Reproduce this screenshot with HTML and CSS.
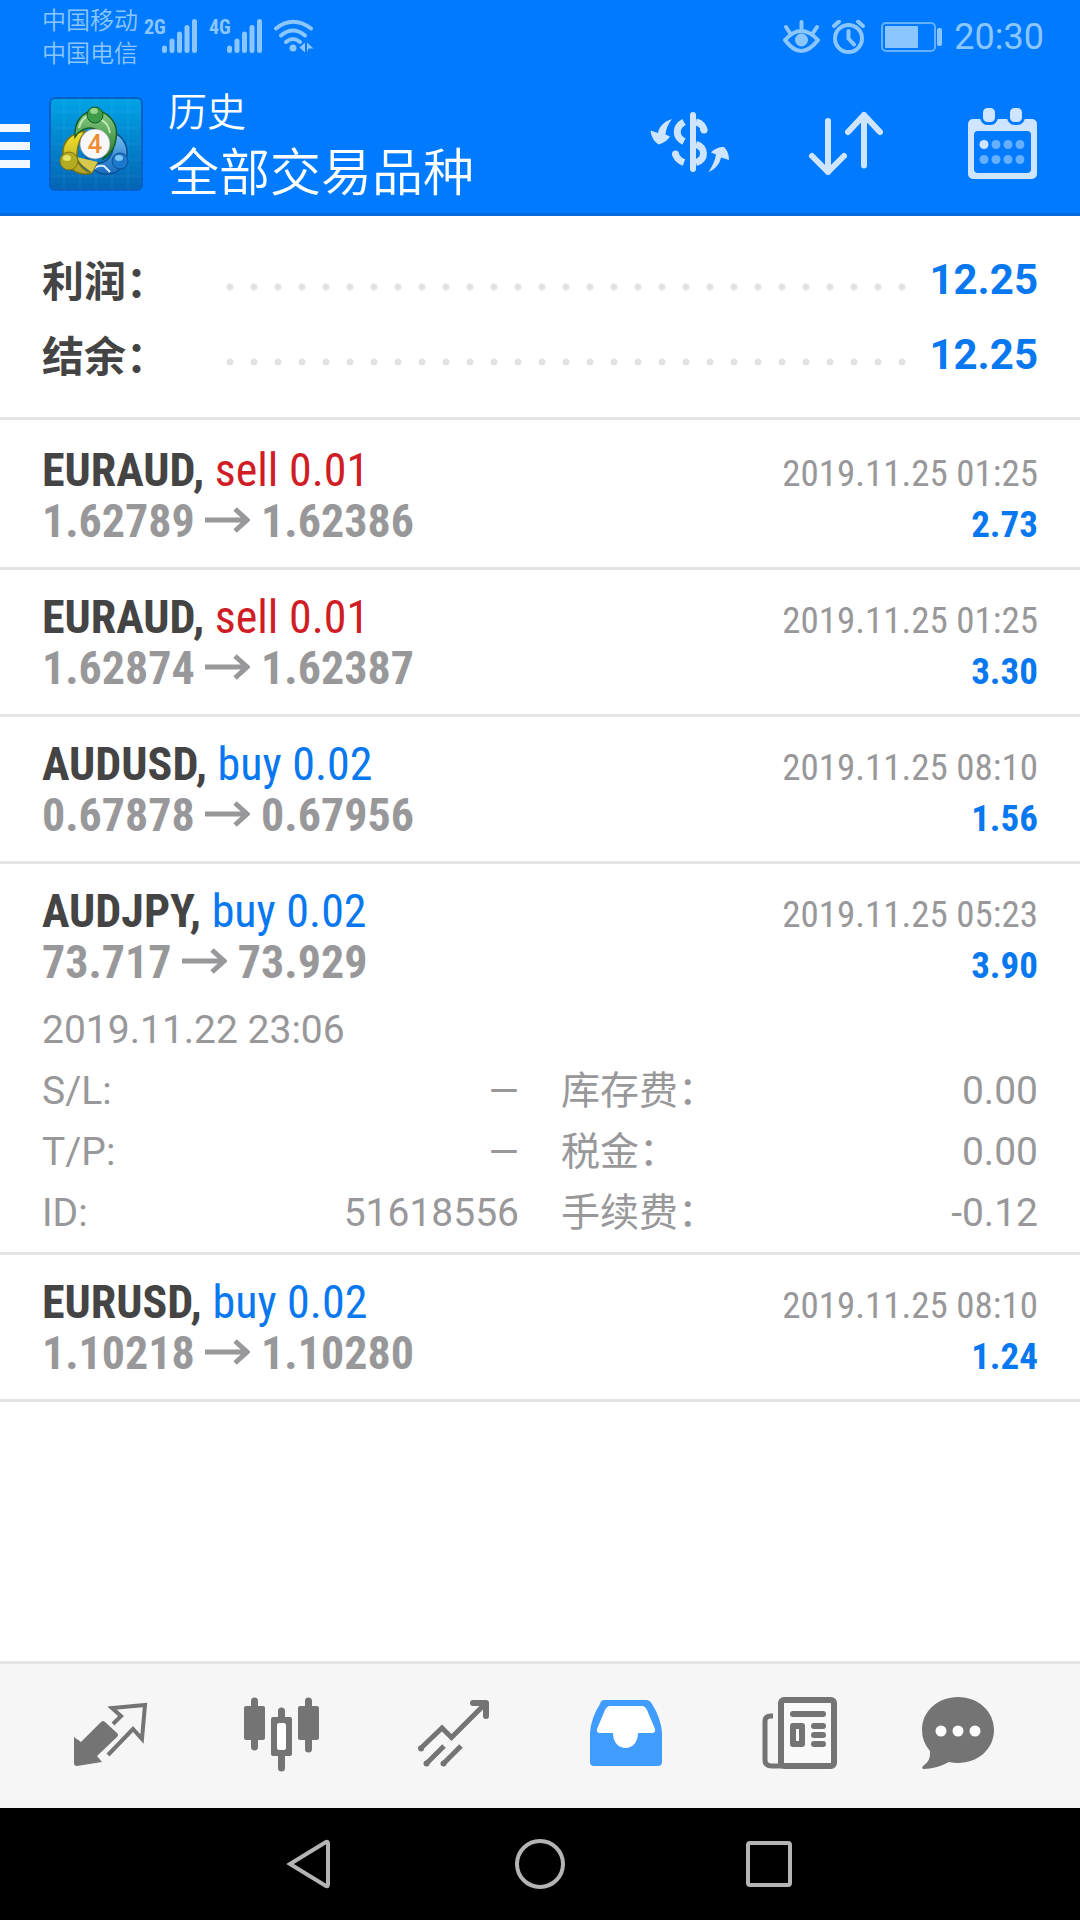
FILE: index.html
```html
<!DOCTYPE html>
<html lang="zh-CN">
<head>
<meta charset="utf-8">
<meta name="viewport" content="width=device-width, initial-scale=1">
<title>历史</title>
<link rel="stylesheet" href="styles.css">
</head>
<body>
<header class="header">
  <div class="status">
    <div class="carriers"><span>中国移动</span><span>中国电信</span></div>
    <div class="signal">
      <span class="net">2G</span>
      <svg width="35" height="34" viewBox="0 0 35 34"><path d="M2.5 29v2.5M10 22v9.500M17.500 15v16.500M25 8.500v23M32.500 2.500v29"/></svg>
    </div>
    <div class="signal">
      <span class="net">4G</span>
      <svg width="35" height="34" viewBox="0 0 35 34"><path d="M2.5 29v2.5M10 22v9.500M17.500 15v16.500M25 8.500v23M32.500 2.500v29"/></svg>
    </div>
    <svg class="wifi" width="40" height="34" viewBox="0 0 40 34">
      <path class="line" d="M2 9.500Q19 -4 37 9.500M7 16.500Q19 6.500 31 16.500M12 23Q19 17 26 23"/>
      <circle cx="19" cy="29" r="3.500"/>
      <path d="M25.500 28.500l5.500-5v10zM33 23.500v10l1.500-4h5z"/>
    </svg>
    <div class="status-right">
      <svg class="line" width="37" height="34" viewBox="0 0 37 34">
        <path d="M2 20Q18 2 35 20Q18 42 2 20ZM18.500 2v6M3 7l4 6M34 7l-4 6"/>
        <circle class="solid" cx="18.500" cy="20" r="4.500"/>
      </svg>
      <svg class="line" width="33" height="34" viewBox="0 0 33 34">
        <circle cx="16.500" cy="18.500" r="13.500"/>
        <path d="M16.500 11v7.500l5.500 6M2 6l5-4.500M31 6l-5-4.500"/>
      </svg>
      <svg class="battery" width="61" height="30" viewBox="0 0 61 30">
        <rect class="shell" x="1" y="1" width="53" height="28" rx="4"/>
        <rect x="4" y="4" width="33" height="22" rx="1"/>
        <rect x="56" y="6" width="5" height="18" rx="2"/>
      </svg>
      <time class="clock">20:30</time>
    </div>
  </div>
  <div class="toolbar">
    <button class="menu" aria-label="菜单">
      <svg width="30" height="50" viewBox="0 0 30 50"><path d="M0 5h30v8H0zM0 23h30v8H0zM0 41h30v8H0z"/></svg>
      <svg width="94" height="94" viewBox="0 0 94 94">
        <defs>
          <linearGradient id="tile" x1="0" y1="0" x2="0" y2="1"><stop offset="0" stop-color="#00a3e6"/><stop offset="1" stop-color="#0464b4"/></linearGradient>
          <linearGradient id="green" x1="0" y1="0" x2="0" y2="1"><stop offset="0" stop-color="#8ccc84"/><stop offset="1" stop-color="#22782c"/></linearGradient>
          <linearGradient id="gold" x1="0" y1="0" x2="0" y2="1"><stop offset="0" stop-color="#f6e428"/><stop offset="1" stop-color="#b0a028"/></linearGradient>
          <linearGradient id="sky" x1="0" y1="0" x2="0" y2="1"><stop offset="0" stop-color="#78c4f4"/><stop offset="1" stop-color="#1468c0"/></linearGradient>
        </defs>
        <rect x="1" y="1" width="92" height="92" rx="5" fill="url(#tile)" stroke="#0860c4" stroke-width="2"/>
        <path d="M15 2v90M31 2v90M47 2v90M63 2v90M79 2v90M2 15h90M2 31h90M2 47h90M2 63h90M2 79h90" stroke="#fff" stroke-opacity=".07"/>
        <path d="M64 36C73 38 79 48 78 58C77 70 66 79 55 77C46 76 39 68 37 61C48 70 61 67 64 52Z" fill="url(#sky)" stroke="#0c4f92" stroke-width="1.500"/>
        <path d="M41 76C45 71 48 68 55 69L61 75" fill="none" stroke="#d4eefc" stroke-width="2"/>
        <path d="M36 34C22 36 13 45 14 57C15 70 29 80 43 76C34 74 27 66 28 57C28 47 32 40 36 34Z" fill="url(#gold)" stroke="#7c7410" stroke-width="1.500"/>
        <path d="M28 60C30 68 37 71 43 76L49 65" fill="#d8c84c" stroke="#7c7410"/>
        <path d="M26 40C25 24 34 14 46 14C60 14 70 27 67 42C66 51 61 58 54 62C60 49 57 36 46 32C37 29 30 34 26 40Z" fill="url(#green)" stroke="#145c24" stroke-width="1.500"/>
        <path d="M30 31C32 22 38 18 44 18M50 22C57 24 60 30 61 36" fill="none" stroke="#bce8b0" stroke-width="2"/>
        <circle cx="46" cy="18" r="8" fill="#3c9c48" stroke="#145c24"/>
        <ellipse cx="45" cy="14" rx="4" ry="3" fill="#98d48c"/>
        <circle cx="20" cy="64" r="9" fill="#b4ac20" stroke="#7c7410"/>
        <ellipse cx="18" cy="61" rx="4" ry="3" fill="#e8e468"/>
        <circle cx="71" cy="64" r="8" fill="#1c78cc" stroke="#0c4f92"/>
        <ellipse cx="70" cy="61" rx="4" ry="3" fill="#7cc4f4"/>
        <circle cx="46" cy="47" r="15" fill="#f8f8fa" stroke="#889" stroke-width=".5"/>
        <text class="logo-digit" x="46" y="56">4</text>
      </svg>
    </button>
    <div class="titles">
      <h1 class="title">历史</h1>
      <p class="subtitle">全部交易品种</p>
    </div>
    <div class="actions">
      <button aria-label="交易品种">
        <svg width="80" height="72" viewBox="0 0 80 72">
          <rect x="40" y="5" width="6" height="60" rx="3"/>
          <path class="dollar" d="M34 15C25 20 25 30 34 34.500M46 15C51 16 54 20 54 24M46 37.500C56 40 56 53 46 55.500"/>
          <path class="dollar" d="M34 55.500Q27 53 25.500 47"/>
          <circle cx="54" cy="23" r="3.500"/><circle cx="25.500" cy="47" r="3.500"/>
          <path d="M22 12C13 15 9 20 8 26L.5 23.500C1 29 4 35 9 37.500C14 36 18 33 20 29.500L15.500 27.500C16 22 18 17 22 12Z"/>
          <path d="M58.500 65C66 62 70 56 71 50.500L79 53C79 47 77 43 74 40C69 40 64 42 61 45.500L66 47.500C65 54 62 60 58.500 65Z"/>
        </svg>
      </button>
      <button aria-label="排序">
        <svg class="sort" width="80" height="72" viewBox="0 0 80 72"><path d="M22 14v51M6 49l16 16 16-16M58 58.500V8M42 25L58 8l16 17"/></svg>
      </button>
      <button aria-label="日期">
        <svg width="80" height="72" viewBox="0 0 80 72">
          <path fill-rule="evenodd" d="M11 12h59a5 5 0 0 1 5 5v50a5 5 0 0 1-5 5H11a5 5 0 0 1-5-5V17a5 5 0 0 1 5-5zM16 24a4 4 0 0 0-4 4v34a4 4 0 0 0 4 4h49a4 4 0 0 0 4-4V28a4 4 0 0 0-4-4z"/>
          <g class="peg"><rect x="19.500" y="-.5" width="15" height="17" rx="6"/><rect x="46.500" y="-.5" width="15" height="17" rx="6"/></g>
          <circle cx="22" cy="37.500" r="4.500"/>
          <g class="dim"><circle cx="34" cy="37.500" r="4.500"/><circle cx="46" cy="37.500" r="4.500"/><circle cx="58" cy="37.500" r="4.500"/><circle cx="22" cy="52.500" r="4.500"/><circle cx="34" cy="52.500" r="4.500"/><circle cx="46" cy="52.500" r="4.500"/><circle cx="58" cy="52.500" r="4.500"/></g>
        </svg>
      </button>
    </div>
  </div>
</header>

<main class="main">
  <dl class="summary">
    <div class="total"><dt>利润：</dt><dd>12.25</dd></div>
    <div class="total"><dt>结余：</dt><dd>12.25</dd></div>
  </dl>
  <ul class="deals">
    <li class="deal">
      <div class="row"><span class="symbol">EURAUD, <span class="sell">sell 0.01</span></span><time class="date">2019.11.25 01:25</time></div>
      <div class="row"><span class="prices">1.62789 <svg class="arrow" width="45" height="26" viewBox="0 0 45 26"><path d="M0 13h42M30 2l12 11-12 11"/></svg> 1.62386</span><span class="profit">2.73</span></div>
    </li>
    <li class="deal">
      <div class="row"><span class="symbol">EURAUD, <span class="sell">sell 0.01</span></span><time class="date">2019.11.25 01:25</time></div>
      <div class="row"><span class="prices">1.62874 <svg class="arrow" width="45" height="26" viewBox="0 0 45 26"><path d="M0 13h42M30 2l12 11-12 11"/></svg> 1.62387</span><span class="profit">3.30</span></div>
    </li>
    <li class="deal">
      <div class="row"><span class="symbol">AUDUSD, <span class="buy">buy 0.02</span></span><time class="date">2019.11.25 08:10</time></div>
      <div class="row"><span class="prices">0.67878 <svg class="arrow" width="45" height="26" viewBox="0 0 45 26"><path d="M0 13h42M30 2l12 11-12 11"/></svg> 0.67956</span><span class="profit">1.56</span></div>
    </li>
    <li class="deal open">
      <div class="row"><span class="symbol">AUDJPY, <span class="buy">buy 0.02</span></span><time class="date">2019.11.25 05:23</time></div>
      <div class="row"><span class="prices">73.717 <svg class="arrow" width="45" height="26" viewBox="0 0 45 26"><path d="M0 13h42M30 2l12 11-12 11"/></svg> 73.929</span><span class="profit">3.90</span></div>
      <div class="details">
        <time class="opened">2019.11.22 23:06</time>
        <dl class="facts">
          <div class="fact"><dt>S/L:</dt><dd>—</dd></div>
          <div class="fact"><dt>库存费：</dt><dd>0.00</dd></div>
          <div class="fact"><dt>T/P:</dt><dd>—</dd></div>
          <div class="fact"><dt>税金：</dt><dd>0.00</dd></div>
          <div class="fact"><dt>ID:</dt><dd>51618556</dd></div>
          <div class="fact"><dt>手续费：</dt><dd>-0.12</dd></div>
        </dl>
      </div>
    </li>
    <li class="deal">
      <div class="row"><span class="symbol">EURUSD, <span class="buy">buy 0.02</span></span><time class="date">2019.11.25 08:10</time></div>
      <div class="row"><span class="prices">1.10218 <svg class="arrow" width="45" height="26" viewBox="0 0 45 26"><path d="M0 13h42M30 2l12 11-12 11"/></svg> 1.10280</span><span class="profit">1.24</span></div>
    </li>
  </ul>
</main>

<nav class="tabs">
  <a href="#quotes" aria-label="行情">
    <svg width="76" height="76" viewBox="0 0 76 76">
      <path d="M2 41l7 5L29 26q2-2 4 0l12 11q2 2 0 4L25 60l5 6L5 70q-3 0-3-3z"/>
      <path class="line4" d="M41 28l8-8-9-8 33-3-3 34-9-10-25 26"/>
    </svg>
  </a>
  <a href="#charts" aria-label="图表">
    <svg width="76" height="76" viewBox="0 0 76 76">
      <path fill-rule="evenodd" d="M7 5a3 3 0 0 1 7 0v5h5a2 2 0 0 1 2 2v30a2 2 0 0 1-2 2h-5v7a3 3 0 0 1-7 0v-7H2a2 2 0 0 1-2-2V12a2 2 0 0 1 2-2h5zM61 5a3 3 0 0 1 7 0v5h5a2 2 0 0 1 2 2v30a2 2 0 0 1-2 2h-5v9a3 3 0 0 1-7 0v-9h-5a2 2 0 0 1-2-2V12a2 2 0 0 1 2-2h5zM34 15a3 3 0 0 1 7 0v6h5a2 2 0 0 1 2 2v35a2 2 0 0 1-2 2h-5v12a3 3 0 0 1-7 0V60h-5a2 2 0 0 1-2-2V23a2 2 0 0 1 2-2h5zM36 27a3 3 0 0 0-3 3v21a3 3 0 0 0 3 3h3a3 3 0 0 0 3-3V30a3 3 0 0 0-3-3z"/>
      <rect class="white" x="33" y="27" width="9" height="27" rx="3"/>
    </svg>
  </a>
  <a href="#trade" aria-label="交易">
    <svg width="76" height="76" viewBox="0 0 76 76">
      <path class="line5" d="M4 53l22-21 9.500 9.500L69 8M10 68l18-18M27 68l18-18"/>
      <path class="line6 round" d="M5 52.500h.1M10.500 67.500h.1M27.500 67.500h.1M57 7h13v13"/>
    </svg>
  </a>
  <a class="active" href="#history" aria-label="历史" aria-current="page">
    <svg width="76" height="76" viewBox="0 0 76 76">
      <path d="M16 4h42q4 0 6 4Q73 22 74 37v29q0 4-4 4H6q-4 0-4-4V37Q3 22 12 8q1-4 4-4z"/>
      <path class="white" d="M22 10q-3 0-5 4L9 33q-1 4 3 4h13c0 20 25 20 25 0h14q4 0 3-4l-8-19q-2-4-5-4z"/>
    </svg>
  </a>
  <a href="#news" aria-label="新闻">
    <svg width="80" height="76" viewBox="0 0 80 76">
      <rect class="line6 paper" x="23" y="4" width="53" height="66" rx="3"/>
      <path class="line5" d="M15 20h-2q-6 0-6 5v39q0 6 7 6h10"/>
      <path class="line6 round" d="M35 18h30M56 30h9M56 39h9M56 48h9"/>
      <path fill-rule="evenodd" d="M35 27h9a3 3 0 0 1 3 3v18a3 3 0 0 1-3 3h-9a3 3 0 0 1-3-3V30a3 3 0 0 1 3-3zM38 33v12h3V33z"/>
    </svg>
  </a>
  <a href="#chat" aria-label="聊天">
    <svg width="100" height="76" viewBox="0 0 100 76">
      <path d="M38 1C58 1 74 15 74 34C74 53 58 67 38 67Q33 67 29 66Q16 73 4 73Q1 73 3 70Q11 65 10 55Q2 46 2 34C2 15 18 1 38 1Z"/>
      <g class="white"><circle cx="21" cy="35" r="5.500"/><circle cx="38" cy="35" r="5.500"/><circle cx="55" cy="35" r="5.500"/></g>
    </svg>
  </a>
</nav>
<div class="system">
  <button aria-label="返回"><svg width="52" height="52" viewBox="0 0 52 52"><path d="M42 4L6 26l36 22q2 1 2-2V6q0-3-2-2z"/></svg></button>
  <button aria-label="主屏幕"><svg width="52" height="52" viewBox="0 0 52 52"><circle cx="26" cy="26" r="23"/></svg></button>
  <button aria-label="最近任务"><svg width="52" height="52" viewBox="0 0 52 52"><rect x="4" y="5" width="42" height="42" rx="2"/></svg></button>
</div>
</body>
</html>
```
FILE: styles.css
```css
:root {
  --blue: #007aff;
  --profit: #0878f0;
  --grey: #98989a;
  --rule: #e4e4e4;
  --pad: 42px;
  --sans: Roboto, "Noto Sans CJK SC", sans-serif;
  --narrow: "Roboto Condensed", "Liberation Sans Narrow", sans-serif;
}

* { box-sizing: border-box; }

body {
  margin: 0;
  min-height: 100vh;
  display: flex;
  flex-direction: column;
  background: #fff;
  font-family: var(--sans);
  color: #444;
}

h1, p, ul, dl, dd { margin: 0; padding: 0; }
ul { list-style: none; }
svg { display: block; flex: none; }
button { padding: 0; border: 0; background: none; font: inherit; }

/* Header */
.header {
  background: var(--blue);
  border-bottom: 3px solid #0869dc;
}

.status {
  display: flex;
  align-items: flex-start;
  height: 72px;
  padding: 5px 36px 0 var(--pad);
  color: #8cc6ff;
  fill: #8cc6ff;
}
.carriers {
  display: grid;
  margin-right: 6px;
  font-size: 24px;
  font-weight: 350;
  line-height: 33px;
}
.signal {
  display: flex;
  align-items: flex-start;
  margin: 14px 12px 0 0;
}
.net {
  width: 18px;
  font: 700 20px/16px var(--narrow);
}
.signal path { stroke: currentColor; stroke-width: 5; stroke-linecap: round; }
.wifi { margin-top: 14px; }
.line { fill: none; stroke: #8cc6ff; stroke-width: 4; stroke-linecap: round; }
.solid { fill: #8cc6ff; }
.status-right {
  display: flex;
  align-items: center;
  gap: 12px;
  height: 64px;
  margin-left: auto;
}
.battery { margin-left: 4px; }
.shell { fill: none; stroke: #64b0ff; stroke-width: 2; }
.clock { font-size: 36px; }

.toolbar {
  display: flex;
  align-items: center;
  height: 141px;
  padding-right: 38px;
}
.menu {
  display: flex;
  align-items: center;
  gap: 19px;
  padding-top: 3px;
  fill: #f2f8ff;
}
.logo-digit {
  fill: #f08c30;
  font: 500 26px var(--sans);
  text-anchor: middle;
}
.titles { margin-left: 25px; padding-top: 6px; color: #fff; }
.title { font-size: 39px; font-weight: 350; line-height: 56px; }
.subtitle { font-size: 51px; font-weight: 350; line-height: 66px; }
.actions {
  display: flex;
  gap: 76px;
  margin-left: auto;
  fill: #cfe5ff;
}
.dollar { fill: none; stroke: #cfe5ff; stroke-width: 7; }
.sort { fill: none; stroke: #cfe5ff; stroke-width: 6; stroke-linecap: round; stroke-linejoin: round; }
.peg { stroke: var(--blue); stroke-width: 3; }
.dim { fill: #66b0ff; }

/* Totals */
.main { flex: 1; }
.summary {
  padding: 26px var(--pad) 25px;
  border-bottom: 3px solid var(--rule);
}
.total {
  display: flex;
  align-items: center;
  height: 75px;
  font-size: 42px;
  font-weight: 700;
}
.total dt { width: 176px; padding-bottom: 3px; }
.total dd {
  flex: 1;
  color: var(--profit);
  text-align: right;
  display: flex;
  align-items: center;
}
.total dd::before {
  content: "";
  flex: 1;
  height: 24px;
  margin: 15px 18px 0 0;
  background: radial-gradient(circle, #e2e2e2 3px, transparent 4px) 0 0 / 24px 24px repeat-x;
}

/* Deals */
.deals { padding-top: 3px; }
.deal {
  padding: 22px var(--pad) 20px;
  border-bottom: 3px solid var(--rule);
  font-family: var(--narrow);
}
.open { padding-bottom: 8px; }
.row {
  display: flex;
  justify-content: space-between;
  align-items: baseline;
  height: 51px;
  font-size: 46px;
  line-height: 51px;
}
.symbol, .prices, .profit { font-weight: 700; }
.prices { color: var(--grey); }
.sell { color: #d01c24; font-weight: 400; }
.buy { color: var(--profit); font-weight: 400; }
.date { font-size: 37px; color: var(--grey); }
.profit { font-size: 37px; color: var(--profit); }
.arrow {
  display: inline-block;
  vertical-align: 4px;
  fill: none;
  stroke: currentColor;
  stroke-width: 5;
}
.details {
  padding-top: 12px;
  font: 400 39px/61px var(--sans);
  color: var(--grey);
}
.opened { display: block; }
.facts {
  display: grid;
  grid-template-columns: 1fr 1fr;
  column-gap: 42px;
}
.fact { display: flex; justify-content: space-between; height: 61px; }

/* Bottom tabs */
.tabs {
  display: grid;
  grid-template-columns: repeat(6, 1fr);
  height: 147px;
  padding: 0 24px;
  border-top: 3px solid var(--rule);
  background: #f6f6f6;
  fill: #747474;
  stroke: none;
}
.tabs a { display: grid; place-items: center; padding-bottom: 4px; }
.tabs .active { fill: #409cff; }
.white { fill: #fff; }
.line4, .line5, .line6 { fill: none; stroke: #747474; stroke-width: 4; }
.line5 { stroke-width: 5; }
.line6 { stroke-width: 6; }
.paper { fill: #f9f9f9; }
.round { stroke-linecap: round; stroke-linejoin: round; }

/* System navigation */
.system {
  display: flex;
  justify-content: center;
  align-items: center;
  gap: 178px;
  height: 112px;
  background: #000;
  fill: none;
  stroke: #b4b4b4;
  stroke-width: 4;
}
```
